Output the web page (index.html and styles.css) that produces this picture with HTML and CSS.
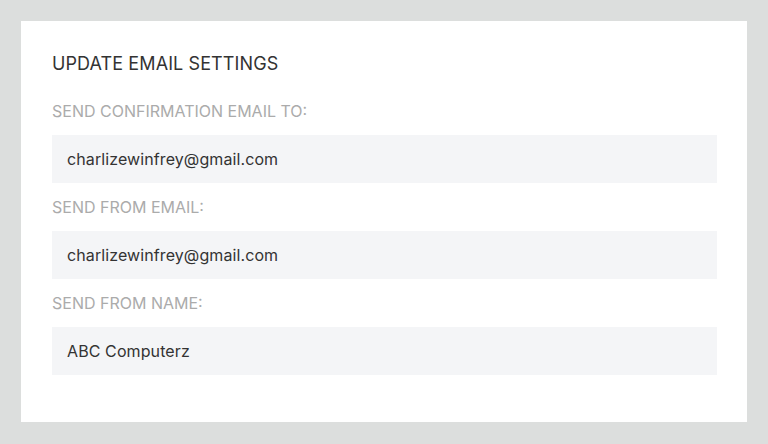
FILE: index.html
```html
<!DOCTYPE html>
<html lang="en">
<head>
    <meta charset="UTF-8">
    <meta name="viewport" content="width=device-width, initial-scale=1.0">
    <title>Update Email Settings</title>
    <link rel="stylesheet" href="styles.css">
</head>
<body>
    <div class="frame">
        <div class="panel">
            <h2 class="panel-title">UPDATE EMAIL SETTINGS</h2>

            <label class="field-label" for="confirmTo">SEND CONFIRMATION EMAIL TO:</label>
            <div class="field" id="confirmTo">charlizewinfrey@gmail.com</div>

            <label class="field-label" for="fromEmail">SEND FROM EMAIL:</label>
            <div class="field" id="fromEmail">charlizewinfrey@gmail.com</div>

            <label class="field-label" for="fromName">SEND FROM NAME:</label>
            <div class="field" id="fromName">ABC Computerz</div>
        </div>
    </div>
</body>
</html>
```

FILE: styles.css
```css
html, body {
    margin: 0;
    padding: 0;
}

body {
    background: #dcdedd;
    font-family: "Inter", "Lato", sans-serif;
}

.frame {
    padding: 21px 21px 22px 21px;
}

.panel {
    background: #ffffff;
    padding: 19px 30px 47px 31px;
    display: flex;
    flex-direction: column;
}

.panel-title {
    margin: 0;
    height: 47px;
    line-height: 48px;
    font-size: 18px;
    font-weight: 400;
    letter-spacing: 0.1px;
    color: #333333;
}

.field-label {
    display: block;
    height: 48px;
    line-height: 48px;
    font-size: 16px;
    color: #ababab;
}

.field {
    height: 48px;
    line-height: 48px;
    padding: 0 15px;
    background: #f4f5f7;
    font-size: 16px;
    letter-spacing: 0.1px;
    color: #333333;
}
```
